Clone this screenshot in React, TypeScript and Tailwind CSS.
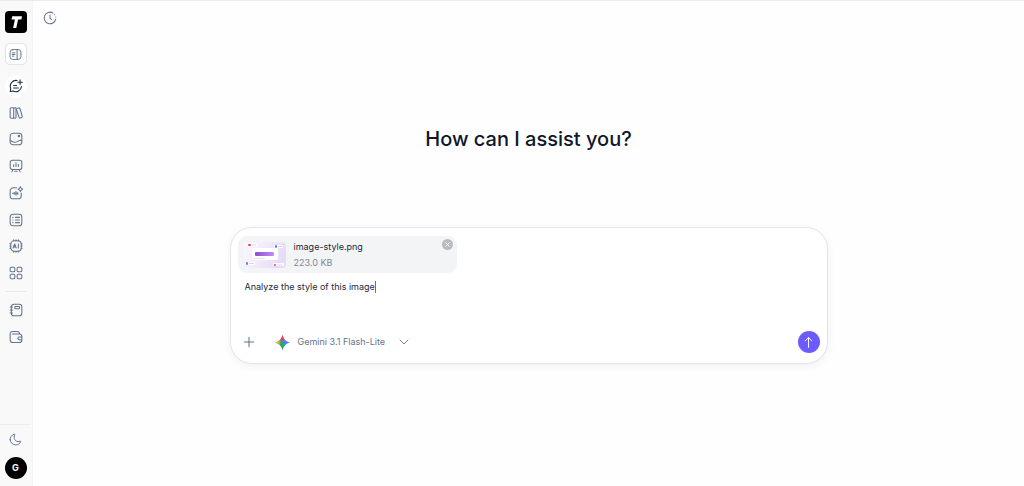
import React from 'react';

type IconProps = { className?: string; children: React.ReactNode };

const Icon: React.FC<IconProps> = ({ className = 'size-[14px]', children }) => (
    <svg
        className={className}
        viewBox="0 0 24 24"
        fill="none"
        stroke="currentColor"
        strokeWidth="1.8"
        strokeLinecap="round"
        strokeLinejoin="round"
        aria-hidden="true"
    >
        {children}
    </svg>
);

const navItems = [
    {
        label: 'New chat',
        active: true,
        icon: (
            <>
                <path d="M14 2.6a10 10 0 0 0-11 13.8L2 21.4l5-.7a10 10 0 0 0 14.5-8" />
                <path d="M19 1.5v8M15 5.5h8M8 11h5M8 15.5h8" />
            </>
        ),
    },
    {
        label: 'Library',
        icon: (
            <>
                <path d="M3.5 3h3A1.500 1.500 0 0 1 8 4.500v15A1.500 1.500 0 0 1 6.500 21h-3A1.500 1.500 0 0 1 2 19.500v-15A1.500 1.500 0 0 1 3.500 3z" />
                <path d="M8 4.500A1.500 1.500 0 0 1 9.500 3H12v16.500a1.500 1.500 0 0 1-1.500 1.500h-1A1.500 1.500 0 0 1 8 19.500" />
                <path d="m13.500 4.500 3.200-1.200a1.500 1.500 0 0 1 2 1l4 13.600a1.500 1.500 0 0 1-1 1.900l-2.500.8a1.500 1.500 0 0 1-1.900-1L12.800 6" />
            </>
        ),
    },
    {
        label: 'Images',
        icon: (
            <>
                <rect x="2" y="2" width="20" height="20" rx="5" />
                <circle cx="17" cy="7" r="1.300" />
                <path d="M2 14c4 3.500 8 4.500 12 2.500 2.500-1.500 5-3 8-2.500" />
            </>
        ),
    },
    {
        label: 'Presentations',
        icon: (
            <>
                <rect x="2" y="2" width="20" height="16" rx="4" />
                <path d="M8 10v3M12 6.500V13M16 9v4M7 18l-2 4M17 18l2 4M10 21h4" />
            </>
        ),
    },
    {
        label: 'Audio',
        icon: (
            <>
                <path d="M13 3H7.500A5.500 5.500 0 0 0 2 8.500v8A5.500 5.500 0 0 0 7.500 22h8a5.500 5.500 0 0 0 5.500-5.500V12" />
                <path d="M19.500 1.500 21 4l2.500 1.500L21 7l-1.500 2.500L18 7l-2.500-1.500L18 4zM6 12.500h9M9 11v3M12 9v7M15 11v3" />
            </>
        ),
    },
    {
        label: 'Prompts',
        icon: (
            <>
                <rect x="2" y="2" width="20" height="20" rx="5" />
                <path d="M6.500 7.500h.5M6.500 12h.5M6.500 16.500h.5M11 7.500h7M11 12h7M11 16.500h7" />
            </>
        ),
    },
    {
        label: 'AI models',
        icon: (
            <>
                <rect x="3" y="3" width="18" height="18" rx="6" />
                <path d="M8 3V1.500M12 3V1.500M16 3V1.500M8 22.500V21M12 22.500V21M16 22.500V21M3 8H1.500M3 12H1.500M3 16H1.500M22.500 8H21M22.500 12H21M22.500 16H21" />
                <path d="m7 15.500 2.700-7 2.700 7M8 13.500h3.500M16 8.500v7" />
            </>
        ),
    },
    {
        label: 'Apps',
        icon: (
            <>
                <rect x="2" y="2" width="8" height="8" rx="2" />
                <rect x="14" y="2" width="8" height="8" rx="2" />
                <rect x="2" y="14" width="8" height="8" rx="2" />
                <rect x="14" y="14" width="8" height="8" rx="2" />
            </>
        ),
    },
];

const savedItems = [
    {
        label: 'Notebook',
        icon: (
            <>
                <rect x="4" y="2" width="18" height="20" rx="4.500" />
                <rect x="10" y="6" width="8" height="4" rx="1" />
                <path d="M2 7h4M2 12h4M2 17h4" />
            </>
        ),
    },
    {
        label: 'Wallet',
        icon: (
            <>
                <path d="M18 7V6a3.500 3.500 0 0 0-3.500-3.500H6A4 4 0 0 0 2 6.500v10.500A4.500 4.500 0 0 0 6.500 21.500h11A4.500 4.500 0 0 0 22 17v-5.500A4.500 4.500 0 0 0 17.500 7H6" />
                <path d="M22 12h-4.500a2.300 2.300 0 0 0 0 4.600H22" />
            </>
        ),
    },
];

const Sidebar: React.FC = () => (
    <aside className="flex w-[33px] shrink-0 flex-col items-center border-r border-[#f4f4f6] bg-[#f9f9f9] pt-[10px] pr-px pb-[7px] text-[#64748b]">
        <a href="#" aria-label="Home" className="flex size-[22px] items-center justify-center rounded-[4px] bg-black">
            <svg className="size-[14px]" viewBox="0 0 14 14" fill="#fff" aria-hidden="true">
                <path d="M3.200 1.200H13l-.7 3.200H9.100L7.300 13H4.100l1.800-8.600H2.500z" />
            </svg>
        </a>
        <button
            aria-label="Toggle sidebar"
            className="mt-[10px] flex size-[22px] items-center justify-center rounded-[5px] border border-[#dfe5ed] bg-white"
        >
            <Icon className="size-[13px]">
                <rect x="2" y="3" width="20" height="18" rx="4.500" />
                <path d="M15 3v18M6 9h5M6 12h5M6 15h3" />
            </Icon>
        </button>
        <nav className="mt-[10px] flex h-[209px] flex-col justify-between">
            {navItems.map((item) => (
                <button
                    key={item.label}
                    aria-label={item.label}
                    className={
                        item.active
                            ? 'flex size-[22px] items-center justify-center rounded-full bg-white text-[#1e293b]'
                            : 'flex size-[22px] items-center justify-center'
                    }
                >
                    <Icon>{item.icon}</Icon>
                </button>
            ))}
        </nav>
        <div className="mt-[7px] w-[22px] border-t border-[#ebebed]" />
        <nav className="mt-[7px] flex flex-col gap-[5px]">
            {savedItems.map((item) => (
                <button key={item.label} aria-label={item.label} className="flex size-[22px] items-center justify-center">
                    <Icon>{item.icon}</Icon>
                </button>
            ))}
        </nav>
        <div className="mt-auto flex w-full flex-col items-center gap-[7px] border-t border-[#ededef] pt-[3px]">
            <button aria-label="Dark mode" className="flex size-[22px] items-center justify-center">
                <Icon className="size-[13px]">
                    <path d="M2 12.500C2.400 18 7 22 12.500 22c4 0 7.500-2.300 9-6 .3-1-.4-1.300-1-1-5 2.500-11-1-11-7 0-1.800.5-3.300 1.200-4.700.4-1-.2-1.500-1-1.200C5 3.500 1.700 8 2 12.500z" />
                </Icon>
            </button>
            <button
                aria-label="Account"
                className="flex size-[22px] items-center justify-center rounded-full bg-black text-[9px] font-bold text-white"
            >
                G
            </button>
        </div>
    </aside>
);

const Thumbnail: React.FC = () => (
    <svg className="h-[26px] w-[42px] shrink-0 rounded-[4px]" viewBox="0 0 42 26" aria-hidden="true">
        <defs>
            <linearGradient id="thumbBg" x1="0" y1="0" x2="1" y2="0.3">
                <stop offset="0" stopColor="#fbf9fe" />
                <stop offset="0.5" stopColor="#f2eafc" />
                <stop offset="1" stopColor="#e6dcfa" />
            </linearGradient>
            <linearGradient id="thumbBar" x1="0" y1="0" x2="1" y2="0">
                <stop offset="0" stopColor="#8b4fd0" />
                <stop offset="1" stopColor="#c48bf7" />
            </linearGradient>
        </defs>
        <rect width="42" height="26" fill="url(#thumbBg)" />
        <rect x="8" y="6" width="26" height="12" rx="1" fill="#fff" />
        <rect x="11" y="10" width="19" height="4" rx="1" fill="url(#thumbBar)" />
        <path d="M9 16.500h12" stroke="#ddd6e5" strokeWidth="0.700" />
        <rect x="4" y="1.500" width="10" height="3" rx="1" fill="#fff" />
        <rect x="30" y="3" width="9" height="3" rx="1" fill="#fff" />
        <rect x="1" y="20" width="10" height="3" rx="1" fill="#fff" />
        <rect x="29" y="21" width="11" height="3" rx="1" fill="#fff" />
        <rect x="4" y="2" width="3" height="2" rx="1" fill="#f03e50" />
        <rect x="31" y="3" width="2" height="3" rx="1" fill="#5b7cfa" />
        <rect x="2" y="20" width="2" height="3" rx="1" fill="#4f83f7" />
        <rect x="30" y="22" width="2" height="2" rx="1" fill="#ef4444" />
        <path d="M8 3h4M34 4.500h4M5 21.500h5M33 23h5" stroke="#c9c4d4" strokeWidth="0.700" />
    </svg>
);

const GeminiLogo: React.FC = () => (
    <svg className="size-[15px]" viewBox="0 0 24 24" aria-hidden="true">
        <defs>
            <clipPath id="spark">
                <path d="M12 0c1.400 6.600 5.400 10.600 12 12-6.600 1.400-10.600 5.400-12 12-1.400-6.600-5.400-10.600-12-12C6.600 10.600 10.600 6.600 12 0z" />
            </clipPath>
            <radialGradient id="sparkRed" cx="11" cy="1" r="10" gradientUnits="userSpaceOnUse">
                <stop offset="0.600" stopColor="#f0433a" />
                <stop offset="1" stopColor="#f0433a" stopOpacity="0" />
            </radialGradient>
            <radialGradient id="sparkYellow" cx="0" cy="12" r="10" gradientUnits="userSpaceOnUse">
                <stop offset="0.500" stopColor="#fbbc04" />
                <stop offset="1" stopColor="#fbbc04" stopOpacity="0" />
            </radialGradient>
            <radialGradient id="sparkGreen" cx="8" cy="20" r="11" gradientUnits="userSpaceOnUse">
                <stop offset="0.600" stopColor="#22ad5c" />
                <stop offset="1" stopColor="#22ad5c" stopOpacity="0" />
            </radialGradient>
        </defs>
        <g clipPath="url(#spark)">
            <rect width="24" height="24" fill="#3b87fc" />
            <rect width="24" height="24" fill="url(#sparkGreen)" />
            <rect width="24" height="24" fill="url(#sparkRed)" />
            <rect width="24" height="24" fill="url(#sparkYellow)" />
        </g>
    </svg>
);

const Composer: React.FC = () => (
    <form className="w-full max-w-[598px] rounded-[22px] border border-[#e2e5e9] bg-white px-[7px] pt-2 pb-[10px] shadow-[0_2px_8px_rgba(0,0,0,0.06)]">
        <div className="flex h-[37px] w-[219px] items-center gap-2 rounded-[9px] bg-[#f3f4f6] pr-[4px] pl-[6px]">
            <Thumbnail />
            <div className="min-w-0 flex-1 text-[9px] leading-4">
                <p className="text-[#1e293b]">image-style.png</p>
                <p className="text-[#7c8799]">223.0 KB</p>
            </div>
            <button
                type="button"
                aria-label="Remove file"
                className="mt-[3px] flex size-[11px] items-center justify-center self-start rounded-full bg-[#b9bbbe] text-white"
            >
                <Icon className="size-[7px]">
                    <path d="m6 6 12 12M18 6 6 18" strokeWidth="3" />
                </Icon>
            </button>
        </div>
        <div className="mt-[6px] flex h-[52px] items-start pl-[7px]">
            <textarea
                aria-label="Message"
                rows={1}
                defaultValue="Analyze the style of this image"
                className="field-sizing-content max-w-full resize-none overflow-hidden text-[9px] leading-4 text-[#1e293b] caret-transparent outline-none"
            />
            <span className="mt-[2px] h-3 w-px bg-[#64748b]" />
        </div>
        <div className="flex items-center text-[#64748b]">
            <button type="button" aria-label="Add attachment" className="flex size-[22px] items-center justify-center">
                <Icon className="size-[14px]">
                    <path d="M12 4v16M4 12h16" />
                </Icon>
            </button>
            <button type="button" className="ml-[15px] flex items-center text-[9px] leading-4">
                <GeminiLogo />
                <span className="ml-2">Gemini 3.1 Flash-Lite</span>
                <Icon className="ml-[13px] size-3">
                    <path d="m4 8 8 8 8-8" />
                </Icon>
            </button>
            <button
                type="submit"
                aria-label="Send"
                className="ml-auto flex size-[22px] items-center justify-center rounded-full bg-[#6c5cff] text-white"
            >
                <Icon className="size-[13px]">
                    <path d="M12 21V3.500M6 9l6-6 6 6" />
                </Icon>
            </button>
        </div>
    </form>
);

export default function App() {
    return (
        <div className="flex min-h-screen border-t border-[#ebebeb] bg-[#fefefe] font-['Inter',sans-serif]">
            <Sidebar />
            <main className="flex flex-1 flex-col px-[6px]">
                <header className="flex h-[33px] items-center">
                    <button aria-label="History" className="flex size-[22px] items-center justify-center text-[#64748b]">
                        <Icon>
                            <path d="M17 3.300A10 10 0 1 0 21.800 14M20 6.200l.1.100M21.900 10.200v.1M12 7v5.500l2.500 2" />
                        </Icon>
                    </button>
                </header>
                <div className="flex flex-col items-center pt-[91px]">
                    <h1 className="text-[20px] leading-7 font-medium text-[#0f172a]">How can I assist you?</h1>
                    <div className="mt-[74px] flex w-full justify-center">
                        <Composer />
                    </div>
                </div>
            </main>
        </div>
    );
}
